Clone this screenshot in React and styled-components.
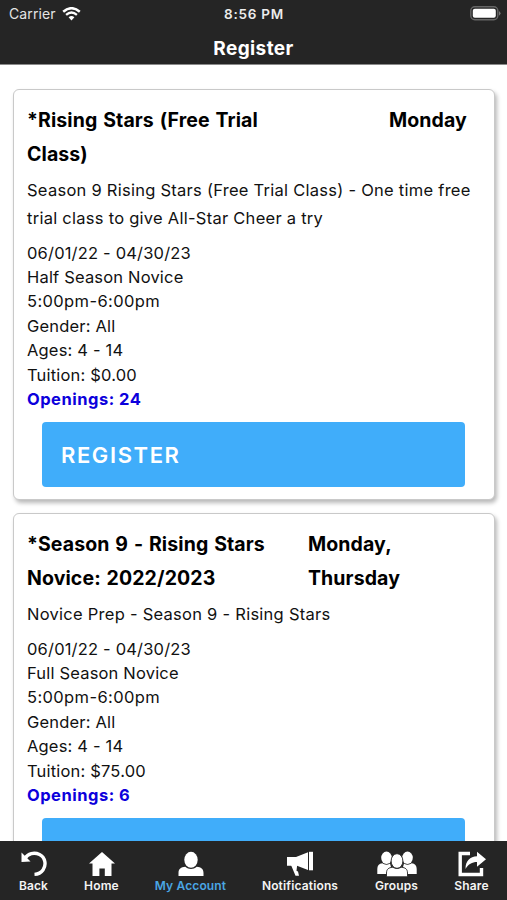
// src/App.jsx
import React from "react";
import styled, { createGlobalStyle } from "styled-components";

const GlobalStyle = createGlobalStyle`
  * {
    box-sizing: border-box;
  }

  body {
    margin: 0;
    background-color: #fff;
    font-family: Inter, "Liberation Sans", sans-serif;
    overflow: hidden;
  }
`;

const Screen = styled.div`
  display: flex;
  flex-direction: column;
  width: 507px;
  height: 900px;
  background-color: #fff;
  overflow: hidden;
`;

const Header = styled.header`
  flex: none;
  height: 65px;
  background-color: #252525;
  border-bottom: 1px solid #8a8a8a;
  color: #fff;
`;

const StatusBar = styled.div`
  display: grid;
  grid-template-columns: 1fr auto 1fr;
  align-items: center;
  height: 27px;
  padding: 0 6px 0 9px;
`;

const Carrier = styled.div`
  display: flex;
  align-items: center;
  gap: 6px;
  font-size: 14px;
  letter-spacing: 0.1px;
  color: #e4e4e4;
`;

const Clock = styled.div`
  margin-right: 2px;
  font-size: 13.5px;
  font-weight: 600;
  letter-spacing: 0.75px;
  color: #ececec;
`;

const BatteryIcon = styled.svg`
  justify-self: end;
  width: 31px;
  height: 15px;
`;

const PageTitle = styled.h1`
  margin: 0;
  font-size: 19px;
  font-weight: 700;
  line-height: 43px;
  letter-spacing: 0.4px;
  text-align: center;
`;

const ClassList = styled.main`
  flex: 1;
  display: flex;
  flex-direction: column;
  gap: 13px;
  min-height: 0;
  padding: 24px 12px 0 13px;
  overflow: hidden;
`;

const Card = styled.section`
  flex: none;
  height: 411px;
  padding: 13px 28px 0 13px;
  border: 1px solid #c9c9c9;
  border-radius: 6px;
  background-color: #fff;
  box-shadow: 2px 3px 4px rgba(0, 0, 0, 0.28);
  color: #111;
`;

const CardTop = styled.div`
  display: flex;
  justify-content: space-between;
  font-size: 19.5px;
  font-weight: 700;
  line-height: 34.3px;
  letter-spacing: 0.1px;
  word-spacing: 1.1px;
  color: #000;
  white-space: pre-line;
`;

const ClassName = styled.h2`
  margin: 0;
  font: inherit;
`;

const Days = styled.div`
  width: ${(props) => props.$width}px;
`;

const Description = styled.p`
  margin: 4.8px 0 8.2px;
  font-size: 16.5px;
  line-height: 28px;
  letter-spacing: 0.26px;
  white-space: pre;
`;

const Details = styled.div`
  font-size: 16.5px;
  line-height: 24.4px;
  letter-spacing: 0.18px;
`;

const Time = styled.div`
  letter-spacing: 0.38px;
`;

const Openings = styled.div`
  font-weight: 700;
  letter-spacing: 0.5px;
  color: #0c00dc;
`;

const RegisterButton = styled.button`
  display: block;
  width: 423px;
  height: 65px;
  margin: 11px 0 0 15px;
  padding: 0 19px;
  border: none;
  border-radius: 4px;
  background-color: #40adfa;
  color: #fff;
  font-family: inherit;
  font-size: 22px;
  font-weight: 600;
  letter-spacing: 1.6px;
  text-align: left;
`;

const TabBar = styled.nav`
  flex: none;
  display: grid;
  grid-template-columns: 67px 69px 109px 110px 83px 67px;
  height: 59px;
  background-color: #252525;
`;

const Tab = styled.div`
  display: flex;
  flex-direction: column;
  align-items: center;
  padding-top: 10px;
  font-size: 12px;
  font-weight: 600;
  line-height: 18px;
  letter-spacing: 0.15px;
  white-space: nowrap;
  color: ${(props) => (props.$active ? "#4aa6e4" : "#f4f4f4")};
`;

const TabIcon = styled.svg`
  width: ${(props) => props.$width}px;
  height: 26px;
  fill: #fff;
`;

const tabs = [
  {
    label: "Back",
    width: 26,
    icon: (
      <>
        <path
          d="M4 7.5 C7 2.5 13 1 18.5 3.5 C24.5 6.5 25.5 14 22 19 C20 21.8 17 23.2 13.5 23.4"
          fill="none"
          stroke="#fff"
          strokeWidth="3.4"
        />
        <path d="M0.5 1.5 L0.5 11 L9.5 10.5 Z" />
      </>
    ),
  },
  {
    label: "Home",
    width: 26,
    icon: <path d="M13 1 L26 12.5 H22.5 V25 H15.8 V17.5 H10.4 V25 H3.5 V12.5 H0 Z" />,
  },
  {
    label: "My Account",
    width: 26,
    active: true,
    icon: (
      <>
        <ellipse cx="13" cy="8.8" rx="6.7" ry="8" />
        <path d="M0.5 25 V22 C0.5 18 3 16 7.3 15.8 C10.7 18.7 15.3 18.7 18.7 15.8 C23 16 25.5 18 25.5 22 V25 Z" />
      </>
    ),
  },
  {
    label: "Notifications",
    width: 28,
    icon: (
      <>
        <path d="M1 6 H10 L22 1.2 V19 L11 14.8 H1 Z" />
        <path d="M23 0.8 H27 V19.3 H23 Z" />
        <path d="M5 14 L9.5 24.8 H13 L12 20.5 L10.5 19.8 L11.2 14 Z" />
      </>
    ),
  },
  {
    label: "Groups",
    width: 40,
    icon: (
      <>
        <ellipse cx="9.5" cy="6.8" rx="5.3" ry="6.2" />
        <ellipse cx="30.5" cy="6.8" rx="5.3" ry="6.2" />
        <path d="M0.3 23 V18 C0.3 14.5 2 12.8 5.3 12.3 Q9 15 13 12.5 L16 23 Z" />
        <path d="M39.7 23 V18 C39.7 14.5 38 12.8 34.7 12.3 Q31 15 27 12.5 L24 23 Z" />
        <g stroke="#252525" strokeWidth="0.9">
          <path d="M9.5 25.8 V22 C9.5 18.3 11.5 16.6 15.5 16.3 Q20 18.8 24.5 16.3 C28.5 16.6 30.5 18.3 30.5 22 V25.8 Z" />
          <ellipse cx="20" cy="10" rx="5.9" ry="7.3" />
        </g>
      </>
    ),
  },
  {
    label: "Share",
    width: 28,
    icon: (
      <>
        <path
          d="M12 2.5 H2.2 V23.5 H23.5 V17"
          fill="none"
          stroke="#fff"
          strokeWidth="3.4"
        />
        <path d="M7.5 18 C7.5 10 12 5.5 19 5.3 V0.8 L28 8.3 L19 15.8 V11 C14 11 10.5 13 7.5 18 Z" />
      </>
    ),
  },
];

const classes = [
  {
    name: "*Rising Stars (Free Trial\nClass)",
    days: "Monday",
    daysWidth: 77,
    description:
      "Season 9 Rising Stars (Free Trial Class) - One time free\ntrial class to give All-Star Cheer a try",
    dates: "06/01/22 - 04/30/23",
    session: "Half Season Novice",
    time: "5:00pm-6:00pm",
    gender: "All",
    ages: "4 - 14",
    tuition: "$0.00",
    openings: 24,
  },
  {
    name: "*Season 9 - Rising Stars\nNovice: 2022/2023",
    days: "Monday,\nThursday",
    daysWidth: 158,
    description: "Novice Prep - Season 9 - Rising Stars",
    dates: "06/01/22 - 04/30/23",
    session: "Full Season Novice",
    time: "5:00pm-6:00pm",
    gender: "All",
    ages: "4 - 14",
    tuition: "$75.00",
    openings: 6,
  },
];

function WifiIcon() {
  return (
    <svg width="19" height="14" viewBox="0 0 19 14" fill="none" stroke="#fff">
      <path d="M1.2 4.8 Q9.5 -2.4 17.8 4.8" strokeWidth="2.5" />
      <path d="M4.1 7.8 Q9.5 3.2 14.9 7.8" strokeWidth="2.3" />
      <path d="M6.6 10.2 Q9.5 7.8 12.4 10.2 L9.5 13.5 Z" fill="#fff" stroke="none" />
    </svg>
  );
}

function ClassCard({ item }) {
  return (
    <Card>
      <CardTop>
        <ClassName>{item.name}</ClassName>
        <Days $width={item.daysWidth}>{item.days}</Days>
      </CardTop>
      <Description>{item.description}</Description>
      <Details>
        <div>{item.dates}</div>
        <div>{item.session}</div>
        <Time>{item.time}</Time>
        <div>Gender: {item.gender}</div>
        <div>Ages: {item.ages}</div>
        <div>Tuition: {item.tuition}</div>
        <Openings>Openings: {item.openings}</Openings>
      </Details>
      <RegisterButton>REGISTER</RegisterButton>
    </Card>
  );
}

function App() {
  return (
    <>
      <GlobalStyle />
      <Screen>
        <Header>
          <StatusBar>
            <Carrier>
              Carrier
              <WifiIcon />
            </Carrier>
            <Clock>8:56 PM</Clock>
            <BatteryIcon viewBox="0 0 31 15">
              <rect x="0.8" y="0.8" width="27" height="13" rx="4" fill="#252525" stroke="#666" strokeWidth="1.4" />
              <rect x="2.8" y="2.8" width="23" height="9" rx="2" fill="#fff" />
              <path d="M29 5 Q32 7.3 29 9.8 Z" fill="#777" />
            </BatteryIcon>
          </StatusBar>
          <PageTitle>Register</PageTitle>
        </Header>
        <ClassList>
          {classes.map((item) => (
            <ClassCard key={item.name} item={item} />
          ))}
        </ClassList>
        <TabBar>
          {tabs.map((tab) => (
            <Tab key={tab.label} $active={tab.active}>
              <TabIcon $width={tab.width} viewBox={`0 0 ${tab.width} 26`}>
                {tab.icon}
              </TabIcon>
              {tab.label}
            </Tab>
          ))}
        </TabBar>
      </Screen>
    </>
  );
}

export default App;
